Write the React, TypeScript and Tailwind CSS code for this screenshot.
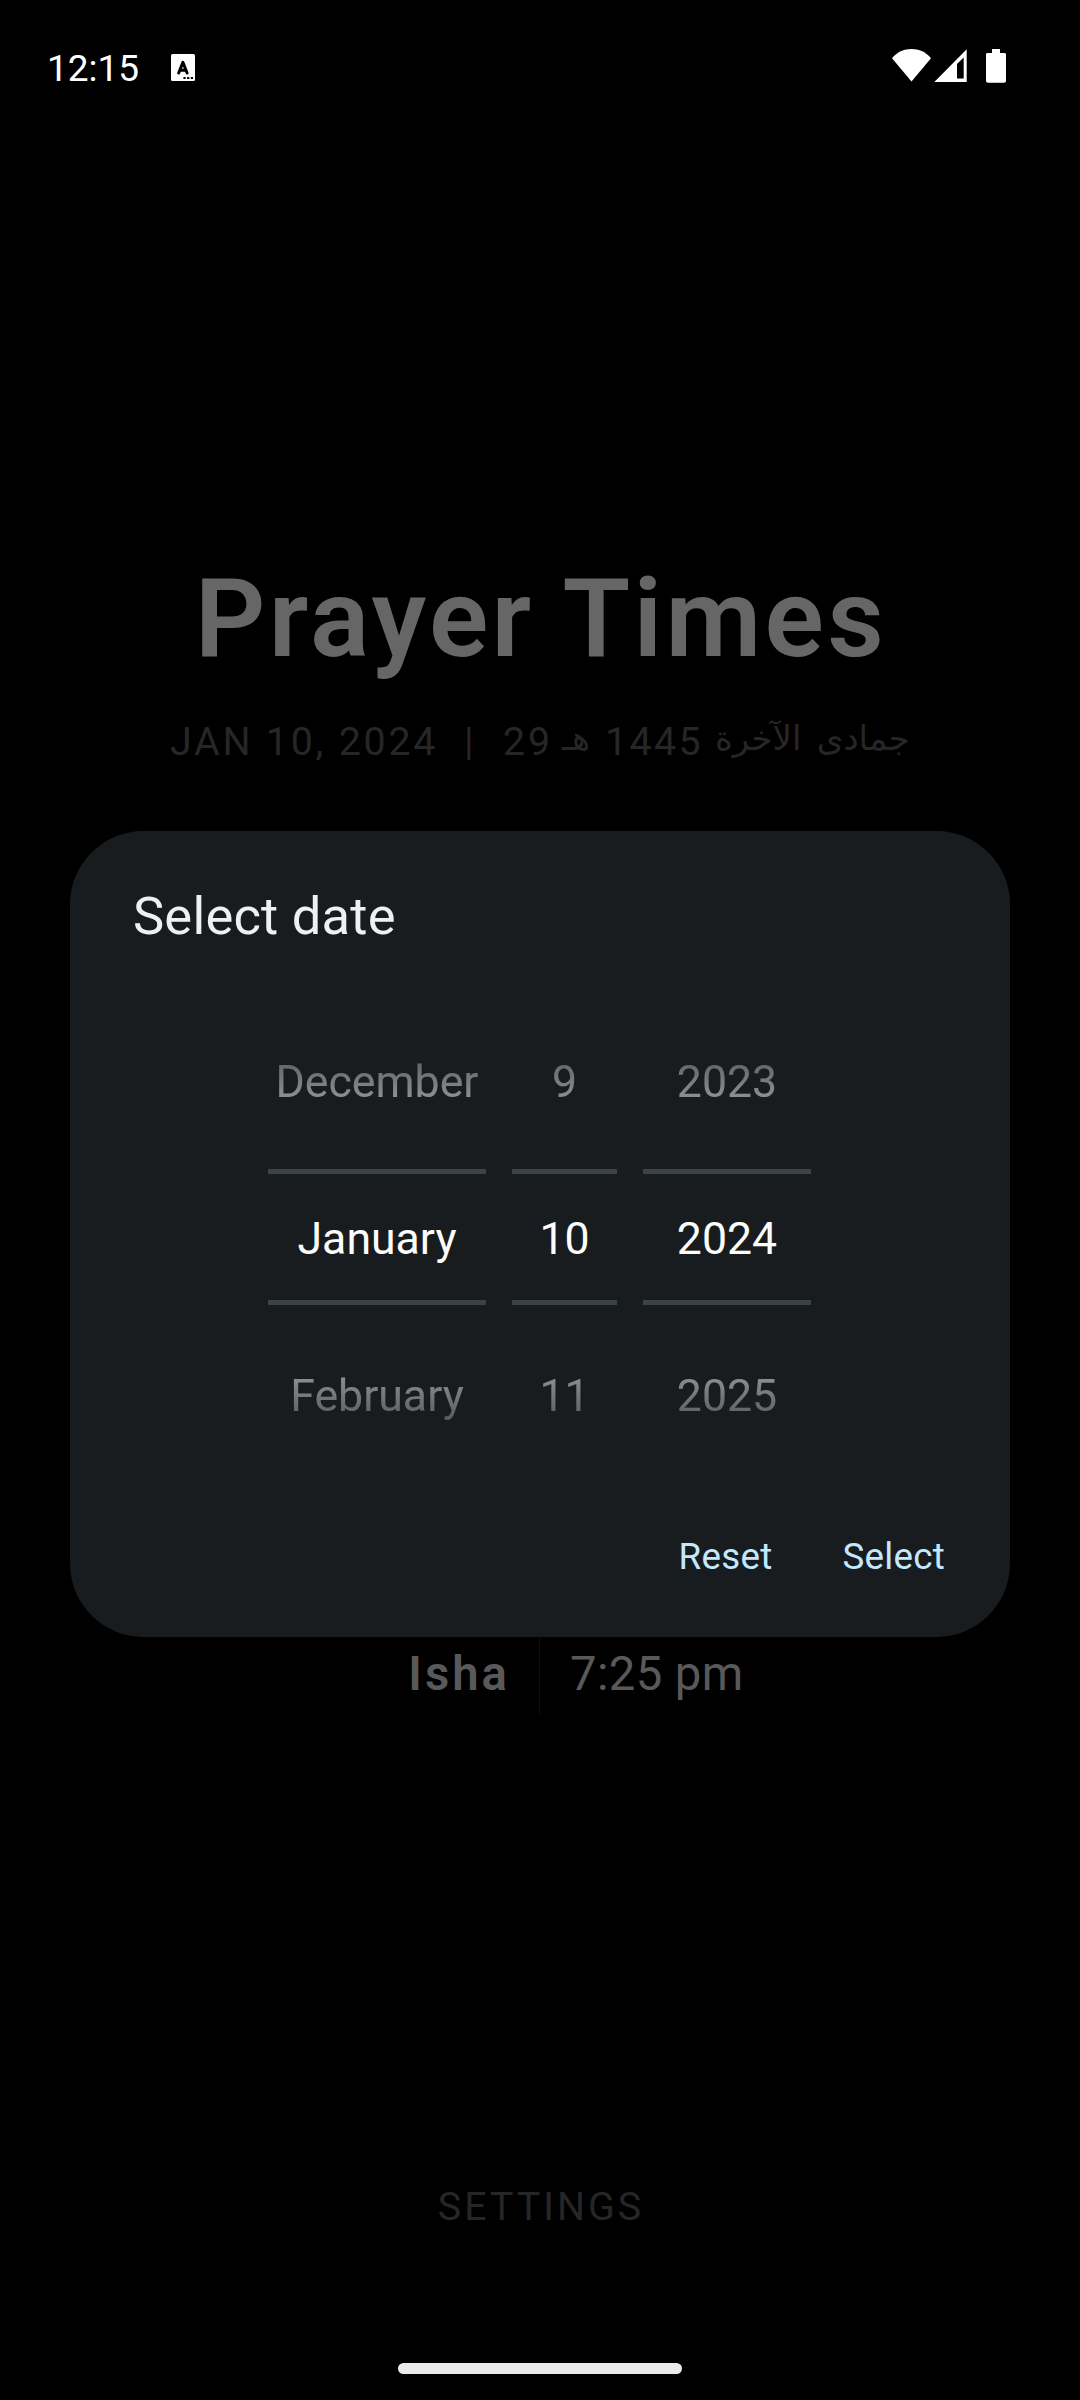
const columns = [
  { values: ['December', 'January', 'February'], width: 'w-[218px]' },
  { values: ['9', '10', '11'], width: 'w-[105px]' },
  { values: ['2023', '2024', '2025'], width: 'w-[168px]' },
];

function LanguageIcon() {
  return (
    <svg className="mb-[2px] ml-[32px] h-[27px] w-6" viewBox="0 0 24 27">
      <rect width="24" height="27" rx="1.6" fill="#fff" />
      <path d="M7.7 19 11.9 8.4 16.1 19M9.4 16.2h5" fill="none" stroke="#000" strokeWidth="3" strokeLinejoin="round" strokeLinecap="round" />
      <path d="M12.4 23.1h2.2v2h-2.2zM16.1 23.1h2.2v2h-2.2zM19.8 23.1h2.2v2h-2.2z" fill="#000" />
    </svg>
  );
}

function StatusIcons() {
  return (
    <div className="mr-[74px] mb-1 ml-auto flex items-start">
      <svg className="h-[34px] w-10" viewBox="0 0 40 34">
        <path d="M0 9.3C5 3 12 0 19.5 0S34 3 39 9.3L19.5 32.6z" fill="#fff" />
      </svg>
      <svg className="ml-0.5 h-[34px] w-[34px]" viewBox="0 0 34 34">
        <path d="M32.7 .2V33H.3zM29.7 8.4 23 15.1v14.5h6.7z" fill="#fff" fillRule="evenodd" />
      </svg>
      <svg className="ml-[18px] h-[34px] w-5" viewBox="0 0 20 34">
        <path d="M6 0h8v4h4.6Q20 4 20 5.4V32q0 1.8-2 1.8H2q-2 0-2-1.8V5.4Q0 4 1.4 4H6z" fill="#fff" />
      </svg>
    </div>
  );
}

function PickerColumn({ values, width }: { values: string[]; width: string }) {
  return (
    <div className={`${width} text-center text-[44.625px] leading-[52px] text-[#fcfcfc]`}>
      <div className="h-[168px] pt-[55px] [mask-image:linear-gradient(to_bottom,transparent_0,black_189px)]">{values[0]}</div>
      <div className="h-[136px] border-y-[5px] border-[#3c4347] pt-[39px]">{values[1]}</div>
      <div className="h-[168px] pt-[65px] [mask-image:linear-gradient(to_top,transparent_0,black_189px)]">{values[2]}</div>
    </div>
  );
}

function DateDialog() {
  return (
    <div className="absolute top-[831px] left-[70px] flex h-[806px] w-[940px] flex-col rounded-[73.5px] bg-[#191c1e]">
      <h2 className="mt-[55px] ml-[63px] text-[52.5px] leading-[60px] tracking-[0.2px] text-[#f0f0f3]">Select date</h2>
      <div className="mt-[55px] ml-[198px] flex gap-[26px]">
        {columns.map((column) => (
          <PickerColumn key={column.width} {...column} />
        ))}
      </div>
      <div className="mt-[62px] mr-[65px] flex justify-end gap-[70px] text-[36.75px] leading-[44px] tracking-[0.26px] text-[#c2e8ff]">
        <button>Reset</button>
        <button>Select</button>
      </div>
    </div>
  );
}

export default function App() {
  return (
    <div className="relative flex h-[2400px] w-[1080px] flex-col overflow-hidden bg-black font-['Roboto','DejaVu_Sans',sans-serif]">
      <div className="flex h-[132px] items-center pt-1 pl-[47px] text-[37px] text-white">
        <span className="pt-px leading-[44px]">12:15</span>
        <LanguageIcon />
        <StatusIcons />
      </div>

      <header className="mt-[422px]">
        <h1 className="pl-0.5 text-center text-[110.25px] leading-[130px] font-semibold tracking-[3.3px] text-[#666666]">Prayer Times</h1>
        <div className="mt-[33px] flex items-baseline pl-[170px] text-[39.375px] leading-[50px] tracking-[2.76px] whitespace-nowrap text-[#262626]">
          <span className="w-[294px]">JAN 10, 2024</span>
          <span className="w-[39px]">|</span>
          <span className="w-[59px]">29</span>
          <span dir="rtl" className="w-[43px] -translate-y-[5px] text-left text-[34px] tracking-normal">هـ</span>
          <span className="w-[110px] tracking-[2.4px]">1445</span>
          <span dir="rtl" className="-translate-y-[5px] text-[34px] tracking-normal [word-spacing:7px]">جمادى الآخرة</span>
        </div>
      </header>

      <main className="mt-[866px] flex h-20 items-center text-[47.25px] leading-[56px] text-[#595959]">
        <div className="w-[539px] pr-[29px] text-right font-semibold tracking-[3px]">Isha</div>
        <div className="flex h-20 w-[541px] items-center border-l border-[#0e0e0e] pl-[30px] tracking-[0.4px]">7:25 pm</div>
      </main>

      <button className="mt-[468px] pl-[2px] text-center text-[39.375px] leading-[50px] tracking-[3px] text-[#262626]">SETTINGS</button>
      <div className="mt-[131px] ml-[398px] h-[11px] w-[284px] rounded-full bg-[#ebebeb]" />

      <DateDialog />
    </div>
  );
}
